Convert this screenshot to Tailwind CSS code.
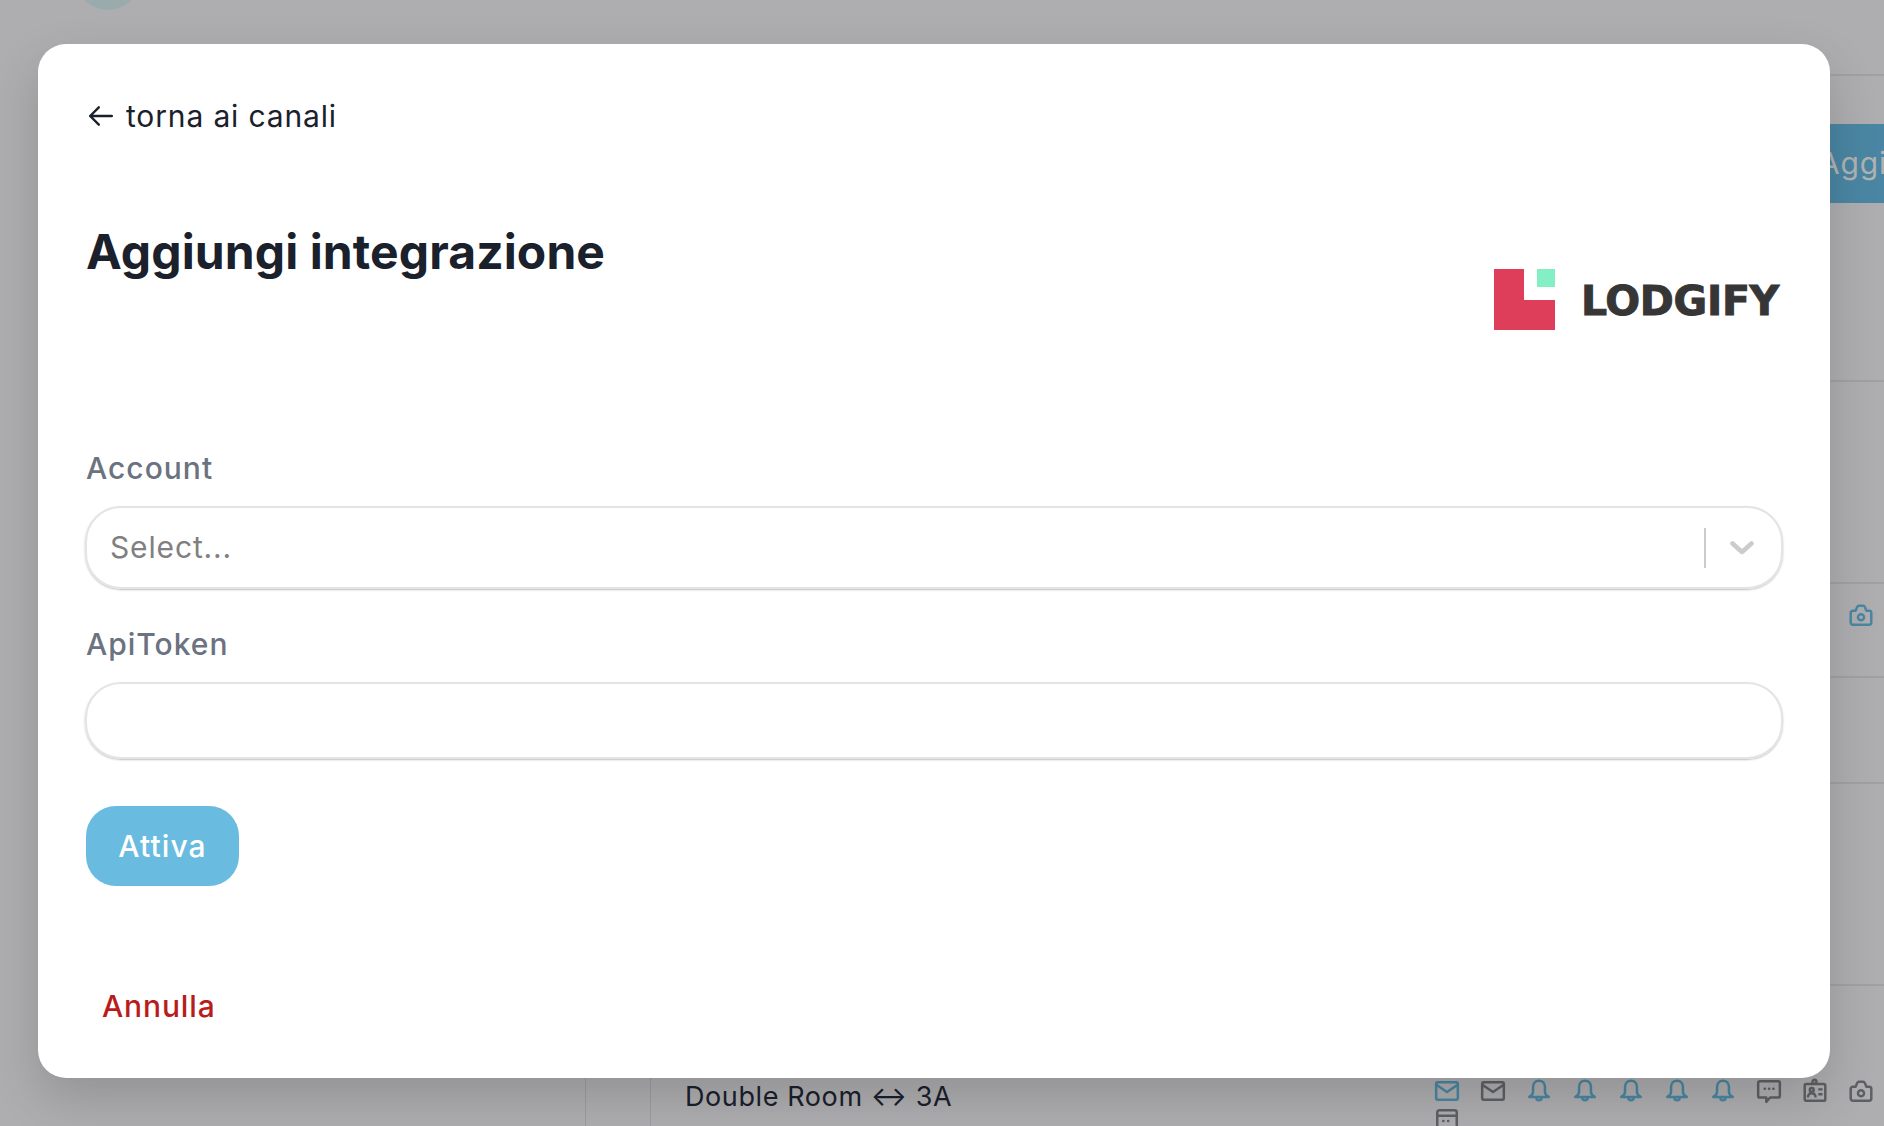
<!DOCTYPE html>
<html lang="it">

<head>
    <meta charset="UTF-8">
    <meta name="viewport" content="width=device-width, initial-scale=1.0">
    <title>Aggiungi integrazione</title>
    <script src="https://cdn.jsdelivr.net/npm/@tailwindcss/browser@4"></script>
</head>

<body class="font-['Inter',sans-serif] text-[#1a202c]">
    <div class="relative w-[1884px] h-[1126px] overflow-hidden bg-[#aeaeb0]">

        <!-- pagina sotto il modale -->
        <div class="flex flex-col h-full">
            <div class="h-[76px] shrink-0 flex justify-between pl-[76px]">
                <div class="w-[64px] h-[64px] -mt-[54px] rounded-full bg-[#9aabae]"></div>
                <div class="w-[400px] border-b-2 border-[#a0a1a3]"></div>
            </div>
            <div class="flex-1 flex min-h-0">
                <div class="w-[586px] shrink-0 border-r border-[#9c9da0]"></div>
                <div class="w-[65px] shrink-0 border-r border-[#9c9da0]"></div>
                <div class="flex-1 flex flex-col min-w-0">
                    <div class="h-[306px] shrink-0 border-b-2 border-[#a0a1a3] pt-[48px] pl-[1140px]">
                        <div class="w-[200px] h-[79px] bg-[#4a86a3] text-[#b2b2b2] text-[30px] tracking-[0.85px] pl-[28px] flex items-center">Aggiungi</div>
                    </div>
                    <div class="h-[202px] shrink-0 border-b-2 border-[#a0a1a3]"></div>
                    <div class="h-[94px] shrink-0 border-b-2 border-[#a0a1a3] flex justify-end pr-[10px] pt-[18px]">
                        <svg class="w-[26px] h-[26px]" viewBox="0 0 24 24" fill="none" stroke="#4a86a3" stroke-width="2.300" stroke-linejoin="round"><path d="M2.500 10a2 2 0 0 1 2-2H7l1.500-3.500q.4-1 1.500-1h4q1.100 0 1.500 1L17 8h2.500a2 2 0 0 1 2 2v9a2 2 0 0 1-2 2h-15a2 2 0 0 1-2-2z"/><circle cx="12" cy="14" r="2.800"/></svg>
                    </div>
                    <div class="h-[106px] shrink-0 border-b-2 border-[#a0a1a3]"></div>
                    <div class="h-[202px] shrink-0 border-b-2 border-[#a0a1a3]"></div>
                    <div class="flex-1 flex justify-between pl-[34px] pt-[92px]">
                        <span class="mt-[1px] text-[27px] tracking-[0.6px] leading-[36px] text-[#1a202c]">Double Room ↔ 3A</span>
                        <div class="w-[450px] flex flex-wrap gap-x-[20px] gap-y-[3px] content-start">
                            <svg class="w-[26px] h-[26px]" viewBox="0 0 24 24" fill="none" stroke="#4a86a3" stroke-width="2.300" stroke-linejoin="round"><rect x="2" y="4" width="20" height="16" rx="1.500"/><path d="M2.500 6.500 12 13l9.500-6.500"/></svg>
                            <svg class="w-[26px] h-[26px]" viewBox="0 0 24 24" fill="none" stroke="#5f6064" stroke-width="2.300" stroke-linejoin="round"><rect x="2" y="4" width="20" height="16" rx="1.500"/><path d="M2.500 6.500 12 13l9.500-6.500"/></svg>
                            <svg class="w-[26px] h-[26px]" viewBox="0 0 24 24" fill="none" stroke="#4a86a3" stroke-width="2.300" stroke-linecap="round" stroke-linejoin="round"><path d="M12 2.500c-3.500 0-5.500 2.500-5.500 6V13c0 2-1.500 3.500-3.500 4.500h18c-2-1-3.500-2.500-3.500-4.500V8.500c0-3.500-2-6-5.500-6z"/><path d="M9.500 18a2.500 2.500 0 0 0 5 0"/></svg>
                            <svg class="w-[26px] h-[26px]" viewBox="0 0 24 24" fill="none" stroke="#4a86a3" stroke-width="2.300" stroke-linecap="round" stroke-linejoin="round"><path d="M12 2.500c-3.500 0-5.500 2.500-5.500 6V13c0 2-1.500 3.500-3.500 4.500h18c-2-1-3.500-2.500-3.500-4.500V8.500c0-3.500-2-6-5.500-6z"/><path d="M9.500 18a2.500 2.500 0 0 0 5 0"/></svg>
                            <svg class="w-[26px] h-[26px]" viewBox="0 0 24 24" fill="none" stroke="#4a86a3" stroke-width="2.300" stroke-linecap="round" stroke-linejoin="round"><path d="M12 2.500c-3.500 0-5.500 2.500-5.500 6V13c0 2-1.500 3.500-3.500 4.500h18c-2-1-3.500-2.500-3.500-4.500V8.500c0-3.500-2-6-5.500-6z"/><path d="M9.500 18a2.500 2.500 0 0 0 5 0"/></svg>
                            <svg class="w-[26px] h-[26px]" viewBox="0 0 24 24" fill="none" stroke="#4a86a3" stroke-width="2.300" stroke-linecap="round" stroke-linejoin="round"><path d="M12 2.500c-3.500 0-5.500 2.500-5.500 6V13c0 2-1.500 3.500-3.500 4.500h18c-2-1-3.500-2.500-3.500-4.500V8.500c0-3.500-2-6-5.500-6z"/><path d="M9.500 18a2.500 2.500 0 0 0 5 0"/></svg>
                            <svg class="w-[26px] h-[26px]" viewBox="0 0 24 24" fill="none" stroke="#4a86a3" stroke-width="2.300" stroke-linecap="round" stroke-linejoin="round"><path d="M12 2.500c-3.500 0-5.500 2.500-5.500 6V13c0 2-1.500 3.500-3.500 4.500h18c-2-1-3.500-2.500-3.500-4.500V8.500c0-3.500-2-6-5.500-6z"/><path d="M9.500 18a2.500 2.500 0 0 0 5 0"/></svg>
                            <svg class="w-[26px] h-[26px]" viewBox="0 0 24 24" fill="none" stroke="#5f6064" stroke-width="2.300" stroke-linecap="round" stroke-linejoin="round"><path d="M3.500 3h17A1.500 1.500 0 0 1 22 4.500v12a1.500 1.500 0 0 1-1.500 1.500H13l-3.500 4v-4h-6A1.500 1.500 0 0 1 2 16.500v-12A1.500 1.500 0 0 1 3.500 3z"/><path d="M8 10h.2M12 10h.2M16 10h.2"/></svg>
                            <svg class="w-[26px] h-[26px]" viewBox="0 0 24 24" fill="none" stroke="#5f6064" stroke-width="2.300" stroke-linejoin="round"><rect x="2.500" y="5.500" width="19" height="15.500" rx="1.500"/><circle cx="11.500" cy="3.500" r="1.800" fill="#aeaeb0"/><circle cx="9" cy="11" r="1.800"/><path d="M5.500 18c0-3 1.500-4 3.500-4s3.500 1 3.500 4M15 10.500h4M15 15h4"/></svg>
                            <svg class="w-[26px] h-[26px]" viewBox="0 0 24 24" fill="none" stroke="#5f6064" stroke-width="2.300" stroke-linejoin="round"><path d="M2.500 10a2 2 0 0 1 2-2H7l1.500-3.500q.4-1 1.500-1h4q1.100 0 1.500 1L17 8h2.500a2 2 0 0 1 2 2v9a2 2 0 0 1-2 2h-15a2 2 0 0 1-2-2z"/><circle cx="12" cy="14" r="2.800"/></svg>
                            <svg class="w-[26px] h-[26px]" viewBox="0 0 24 24" fill="none" stroke="#5f6064" stroke-width="2.300" stroke-linecap="round" stroke-linejoin="round"><rect x="3" y="3" width="18" height="18" rx="2"/><path d="M3 8h18M8.500 13h.2M13 13h.2"/></svg>
                        </div>
                    </div>
                </div>
            </div>
        </div>

        <!-- modale -->
        <div class="absolute left-[38px] top-[44px] w-[1792px] h-[1034px] bg-white rounded-[28px] shadow-[0_20px_50px_rgba(0,0,0,0.16)] px-[48px] pt-[54px]">
            <a class="flex items-center gap-[12px] ml-[2px] h-[36px] text-[30px] tracking-[0.85px] text-[#1a202c]">
                <svg class="w-[26px] h-[26px]" viewBox="0 0 24 24" fill="none" stroke="#1a202c" stroke-width="2.200" stroke-linecap="round" stroke-linejoin="round"><path d="M22 12H2M10 4l-8 8 8 8"/></svg>
                <span>torna ai canali</span>
            </a>

            <div class="flex justify-between items-start mt-[98px]">
                <h2 class="text-[48px] tracking-[0.1px] leading-[40px] font-bold text-[#1a202c]">Aggiungi integrazione</h2>
                <div class="flex items-center gap-[26px] mt-[37px] h-[61px] pr-[3px]">
                    <div class="relative w-[61px] h-[61px] bg-[#df3e5b]">
                        <div class="absolute right-0 top-0 w-[31px] h-[31px] bg-white"></div>
                        <div class="absolute right-0 top-0 w-[18px] h-[18px] bg-[#84efc4]"></div>
                    </div>
                    <span class="mt-[3px] font-['DejaVu_Sans',sans-serif] text-[41px] leading-[41px] font-bold text-[#363636] tracking-[-0.3px] [-webkit-text-stroke:1px_#363636]">LODGIFY</span>
                </div>
            </div>

            <label class="block mt-[120px] text-[30px] tracking-[1px] leading-[36px] font-medium text-[#6b7280]">Account</label>
            <div class="mt-[20px] w-[1698px] -ml-[1px] h-[83px] rounded-[36px] border-2 border-[#e4e4e4] shadow-[0_1px_2px_rgba(0,0,0,0.25)] flex items-center pl-[23px]">
                <span class="flex-1 text-[30px] tracking-[0.85px] text-[#808080]">Select...</span>
                <span class="w-[2px] h-[40px] bg-[#cccccc]"></span>
                <span class="w-[75px] flex justify-center pr-[3px]">
                    <svg class="w-[24px] h-[14px]" viewBox="0 0 24 14" fill="none" stroke="#cccccc" stroke-width="4.500" stroke-linecap="round" stroke-linejoin="round"><path d="M2.500 2.500 12 11l9.500-8.500"/></svg>
                </span>
            </div>

            <label class="block mt-[37px] text-[30px] tracking-[1px] leading-[36px] font-medium text-[#6b7280]">ApiToken</label>
            <input type="text" class="block mt-[20px] w-[1698px] -ml-[1px] h-[77px] rounded-[36px] border-2 border-[#e4e4e4] shadow-[0_1px_2px_rgba(0,0,0,0.25)]">

            <button class="block mt-[47px] w-[153px] h-[80px] rounded-[30px] bg-[#69bbe0] text-white text-[30px] tracking-[1.1px] font-medium">Attiva</button>

            <a class="block mt-[102px] pl-[16px] text-[30px] tracking-[0.85px] leading-[36px] font-medium text-[#b91c1c]">Annulla</a>
        </div>
    </div>
</body>

</html>
